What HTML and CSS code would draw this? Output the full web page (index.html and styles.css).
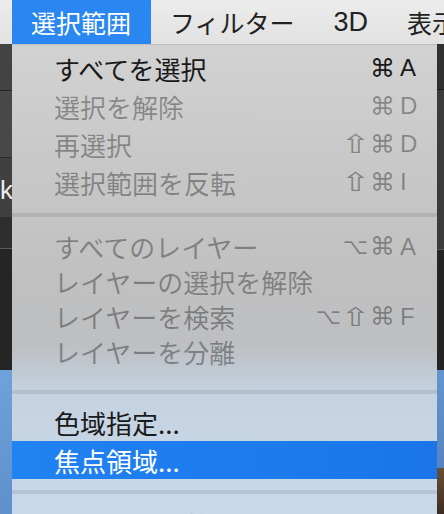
FILE: index.html
```html
<!DOCTYPE html>
<html lang="ja">
<head>
    <meta charset="UTF-8">
    <meta name="viewport" content="width=device-width, initial-scale=1.0">
    <title>選択範囲メニュー</title>
    <link rel="stylesheet" href="styles.css">
</head>
<body>
    <div class="menubar">
        <span class="bar-item active">選択範囲</span>
        <span class="bar-item">フィルター</span>
        <span class="bar-item latin">3D</span>
        <span class="bar-item">表示</span>
    </div>

    <div class="stage">
        <div class="side side-left">
            <div class="block b1"></div>
            <div class="block b2"></div>
            <div class="block b3"><span class="frag">k</span></div>
            <div class="block b4"></div>
            <div class="block b5"></div>
            <div class="block b6"></div>
        </div>

        <div class="menu">
            <div class="group first">
                <div class="item">
                    <span class="label">すべてを選択</span>
                    <span class="keys"><span class="mod">⌘</span><span class="key">A</span></span>
                </div>
                <div class="item disabled">
                    <span class="label">選択を解除</span>
                    <span class="keys"><span class="mod">⌘</span><span class="key">D</span></span>
                </div>
                <div class="item disabled">
                    <span class="label">再選択</span>
                    <span class="keys"><span class="mod shift">⇧</span><span class="mod">⌘</span><span class="key">D</span></span>
                </div>
                <div class="item disabled">
                    <span class="label">選択範囲を反転</span>
                    <span class="keys"><span class="mod shift">⇧</span><span class="mod">⌘</span><span class="key">I</span></span>
                </div>
            </div>

            <div class="sep sep-1"></div>

            <div class="group layers">
                <div class="item disabled">
                    <span class="label">すべてのレイヤー</span>
                    <span class="keys"><span class="mod opt">⌥</span><span class="mod">⌘</span><span class="key">A</span></span>
                </div>
                <div class="item disabled">
                    <span class="label">レイヤーの選択を解除</span>
                </div>
                <div class="item disabled">
                    <span class="label">レイヤーを検索</span>
                    <span class="keys"><span class="mod opt">⌥</span><span class="mod shift">⇧</span><span class="mod">⌘</span><span class="key">F</span></span>
                </div>
                <div class="item disabled">
                    <span class="label">レイヤーを分離</span>
                </div>
            </div>

            <div class="sep sep-2"></div>

            <div class="group">
                <div class="item">
                    <span class="label">色域指定...</span>
                </div>
                <div class="item selected">
                    <span class="label">焦点領域...</span>
                </div>
            </div>

            <div class="sep sep-3"></div>

            <div class="group">
                <div class="item disabled">
                    <span class="label">マスクを調整...</span>
                    <span class="keys"><span class="mod opt">⌥</span><span class="mod">⌘</span><span class="key">R</span></span>
                </div>
            </div>
        </div>

        <div class="side side-right">
            <div class="block r1"></div>
            <div class="block r2"></div>
            <div class="block r3"></div>
            <div class="block r4"></div>
            <div class="block r5"></div>
        </div>
    </div>
</body>
</html>
```

FILE: styles.css
```css
* {
    box-sizing: border-box;
}

body {
    margin: 0;
    width: 444px;
    height: 514px;
    overflow: hidden;
    background-color: #2a2a2a;
    font-family: "Noto Sans CJK JP", "Noto Sans", sans-serif;
}

/* Top menu bar */
.menubar {
    display: flex;
    height: 44px;
    padding-left: 12px;
    overflow: hidden;
    background: linear-gradient(to bottom, #ececec, #e2e2e2);
    white-space: nowrap;
}

.bar-item {
    display: flex;
    flex-shrink: 0;
    align-items: center;
    padding: 0 20px 0 19px;
    font-size: 25px;
    color: #222;
}

.bar-item.active {
    background-color: #2a87f1;
    color: #fff;
}

.bar-item.latin {
    font-family: "Liberation Sans", sans-serif;
    font-size: 27px;
}

/* Area under the bar */
.stage {
    display: flex;
    height: 470px;
}

.side {
    display: flex;
    flex-direction: column;
    overflow: hidden;
}

.side-left {
    width: 12px;
}

.side-right {
    width: 7px;
}

.block {
    flex-shrink: 0;
}

.b1 { height: 47px; background: #434343; border-bottom: 1px solid #222; }
.b2 { height: 67px; background: #484848; border-bottom: 1px solid #2a2a2a; }
.b3 { height: 59px; background: #404040; position: relative; overflow: hidden; }
.b4 { height: 32px; background: #2e2e2e; border-bottom: 1px solid #5a5a5a; }
.b5 { height: 121px; background: #252525; }
.b6 { flex: 1; background: linear-gradient(to bottom, #6ea2da, #5e90cb); }

.r1 { height: 46px; background: #303030; border-bottom: 1px solid #1c1c1c; }
.r2 { height: 160px; background: #3b3b3b; border-bottom: 1px solid #555; }
.r3 { height: 120px; background: #242424; }
.r4 { height: 98px; background: linear-gradient(to bottom, #6595cf, #5584bf); }
.r5 { flex: 1; background: linear-gradient(to bottom, #6a4f3a, #3e2c20); }

.frag {
    position: absolute;
    left: 0;
    top: 19px;
    font-family: "Liberation Sans", sans-serif;
    font-size: 26px;
    line-height: 1;
    color: #ececec;
}

/* Dropdown menu */
.menu {
    flex: 1;
    padding-top: 4px;
    overflow: hidden;
    background: linear-gradient(to bottom, #d2d2d2 0%, #c8c8c8 25%, #c0c0c0 50%, #bdbfc2 64%, #c5d2e0 74%, #c8d9ec 100%);
    border-top: 1px solid #bdbdbd;
}

.group.first .item {
    height: 38px;
}

.group.layers .item {
    height: 35px;
}

.item {
    display: flex;
    align-items: center;
    justify-content: space-between;
    height: 38px;
    padding: 0 17px 0 42px;
    font-size: 26px;
    color: #1a1a1a;
    white-space: nowrap;
}

.item.disabled {
    color: rgba(0, 0, 0, 0.34);
}

.item.selected {
    background: linear-gradient(to right, #2182f2, #1a76e8);
    color: #fff;
}

.keys {
    display: flex;
    align-items: center;
}

.mod {
    display: inline-block;
    width: 27px;
    text-align: center;
    font-family: "DejaVu Sans", sans-serif;
    font-size: 25px;
    line-height: 1;
}

.mod.opt {
    font-size: 22px;
}

.mod.shift {
    font-size: 26px;
    transform: scaleX(1.4);
}

.key {
    width: 20px;
    margin-left: 4px;
    font-family: "Liberation Sans", sans-serif;
    font-size: 24px;
}

.sep {
    height: 4px;
    background-color: rgba(0, 0, 0, 0.09);
}

.sep-1 { margin: 12px 0 12px; }
.sep-2 { margin: 21px 0 9px; }
.sep-3 { margin: 11px 0 11px; }
```
